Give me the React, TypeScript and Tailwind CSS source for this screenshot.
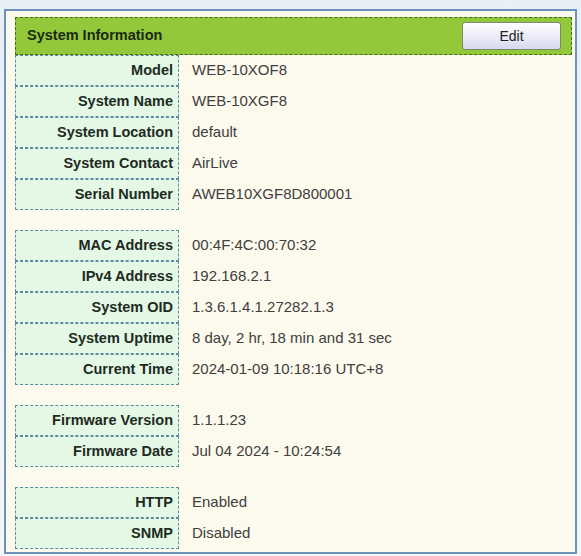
type InfoRow = {
  label: string
  value: string
}

const groups: InfoRow[][] = [
  [
    { label: 'Model', value: 'WEB-10XOF8' },
    { label: 'System Name', value: 'WEB-10XGF8' },
    { label: 'System Location', value: 'default' },
    { label: 'System Contact', value: 'AirLive' },
    { label: 'Serial Number', value: 'AWEB10XGF8D800001' },
  ],
  [
    { label: 'MAC Address', value: '00:4F:4C:00:70:32' },
    { label: 'IPv4 Address', value: '192.168.2.1' },
    { label: 'System OID', value: '1.3.6.1.4.1.27282.1.3' },
    { label: 'System Uptime', value: '8 day, 2 hr, 18 min and 31 sec' },
    { label: 'Current Time', value: '2024-01-09 10:18:16 UTC+8' },
  ],
  [
    { label: 'Firmware Version', value: '1.1.1.23' },
    { label: 'Firmware Date', value: 'Jul 04 2024 - 10:24:54' },
  ],
  [
    { label: 'HTTP', value: 'Enabled' },
    { label: 'SNMP', value: 'Disabled' },
  ],
]

function Row({ row }: { row: InfoRow }) {
  return (
    <div className="flex h-[31px]">
      <div className="flex w-[164px] shrink-0 items-center justify-end border border-dashed border-[#5d8c9c] bg-[#e3f8e5] pr-[5px] text-[14.5px] font-bold text-[#1f2a22]">
        {row.label}
      </div>
      <div className="flex flex-1 items-center pl-[13px] text-[15px] text-[#404040]">
        {row.value}
      </div>
    </div>
  )
}

export default function App() {
  return (
    <div
      className="h-[556px] w-[581px] overflow-hidden bg-gradient-to-b from-[#e8f0f8] to-[#f4f7fa] pl-[4px] pt-[9px]"
      style={{ fontFamily: '"Liberation Sans", Arial, sans-serif' }}
    >
      <div className="h-[545px] w-[573px] border-2 border-[#6e93ba] bg-[#fcf9ed] pl-[9px] pr-[3px] pt-[6px]">
        <div className="flex h-[38px] items-center justify-between border border-dashed border-[#3f6e1c] bg-[#94c83b] pl-[11px] pr-[10px]">
          <h1 className="text-[14.5px] font-bold text-[#1b2a12]">System Information</h1>
          <button className="h-[28px] w-[99px] rounded-[3px] border border-[#7d8a70] bg-gradient-to-b from-[#ffffff] to-[#d9d9ef] text-[14px] text-[#222]">
            Edit
          </button>
        </div>

        <div className="flex flex-col gap-[20px]">
          {groups.map((group, i) => (
            <div key={i}>
              {group.map((row) => (
                <Row key={row.label} row={row} />
              ))}
            </div>
          ))}
        </div>
      </div>
    </div>
  )
}
